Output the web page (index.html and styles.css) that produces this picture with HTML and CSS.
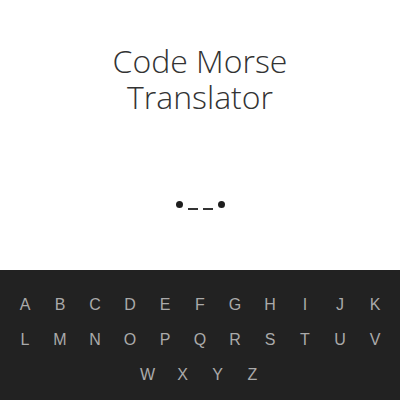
FILE: index.html
```html
<!DOCTYPE html>
<html>
<head>
<meta charset="utf-8">
<link rel="stylesheet" href="styles.css">
</head>
<body>
<main class="top">
  <h1 class="title">Code Morse<br>Translator</h1>
  <div class="morse">
    <span class="dot"></span><span class="dash"></span><span class="dash"></span><span class="dot"></span>
  </div>
</main>
<section class="keyboard">
  <div class="row">
    <span class="key">A</span><span class="key">B</span><span class="key">C</span><span class="key">D</span><span class="key">E</span><span class="key">F</span><span class="key">G</span><span class="key">H</span><span class="key">I</span><span class="key">J</span><span class="key">K</span>
  </div>
  <div class="row">
    <span class="key">L</span><span class="key">M</span><span class="key">N</span><span class="key">O</span><span class="key">P</span><span class="key">Q</span><span class="key">R</span><span class="key">S</span><span class="key">T</span><span class="key">U</span><span class="key">V</span>
  </div>
  <div class="row">
    <span class="key">W</span><span class="key">X</span><span class="key">Y</span><span class="key">Z</span>
  </div>
</section>
</body>
</html>
```
FILE: styles.css
```css
html, body {
  margin: 0;
  padding: 0;
  background: #fff;
}
body {
  width: 400px;
  height: 400px;
  display: flex;
  flex-direction: column;
  overflow: hidden;
}
.top {
  height: 270px;
  display: flex;
  flex-direction: column;
  align-items: center;
}
.title {
  margin: 43px 0 0;
  font-family: "Open Sans", sans-serif;
  font-weight: 300;
  font-size: 32px;
  line-height: 36px;
  color: #333;
  text-align: center;
}
.morse {
  margin-top: 81px;
  height: 16px;
  display: flex;
  align-items: center;
  justify-content: center;
  gap: 5px;
}
.dot {
  width: 7px;
  height: 7px;
  border-radius: 50%;
  background: #1e1e1e;
}
.dash {
  width: 10px;
  height: 2px;
  background: #333;
  margin-top: 10px;
}
.keyboard {
  flex: 1;
  background: #222;
  padding-top: 17px;
  display: flex;
  flex-direction: column;
  align-items: center;
}
.row {
  display: flex;
  justify-content: center;
}
.key {
  width: 35px;
  height: 35px;
  display: flex;
  align-items: center;
  justify-content: center;
  font-family: "Liberation Sans", Arial, sans-serif;
  font-size: 16px;
  color: #aaa;
}
```
